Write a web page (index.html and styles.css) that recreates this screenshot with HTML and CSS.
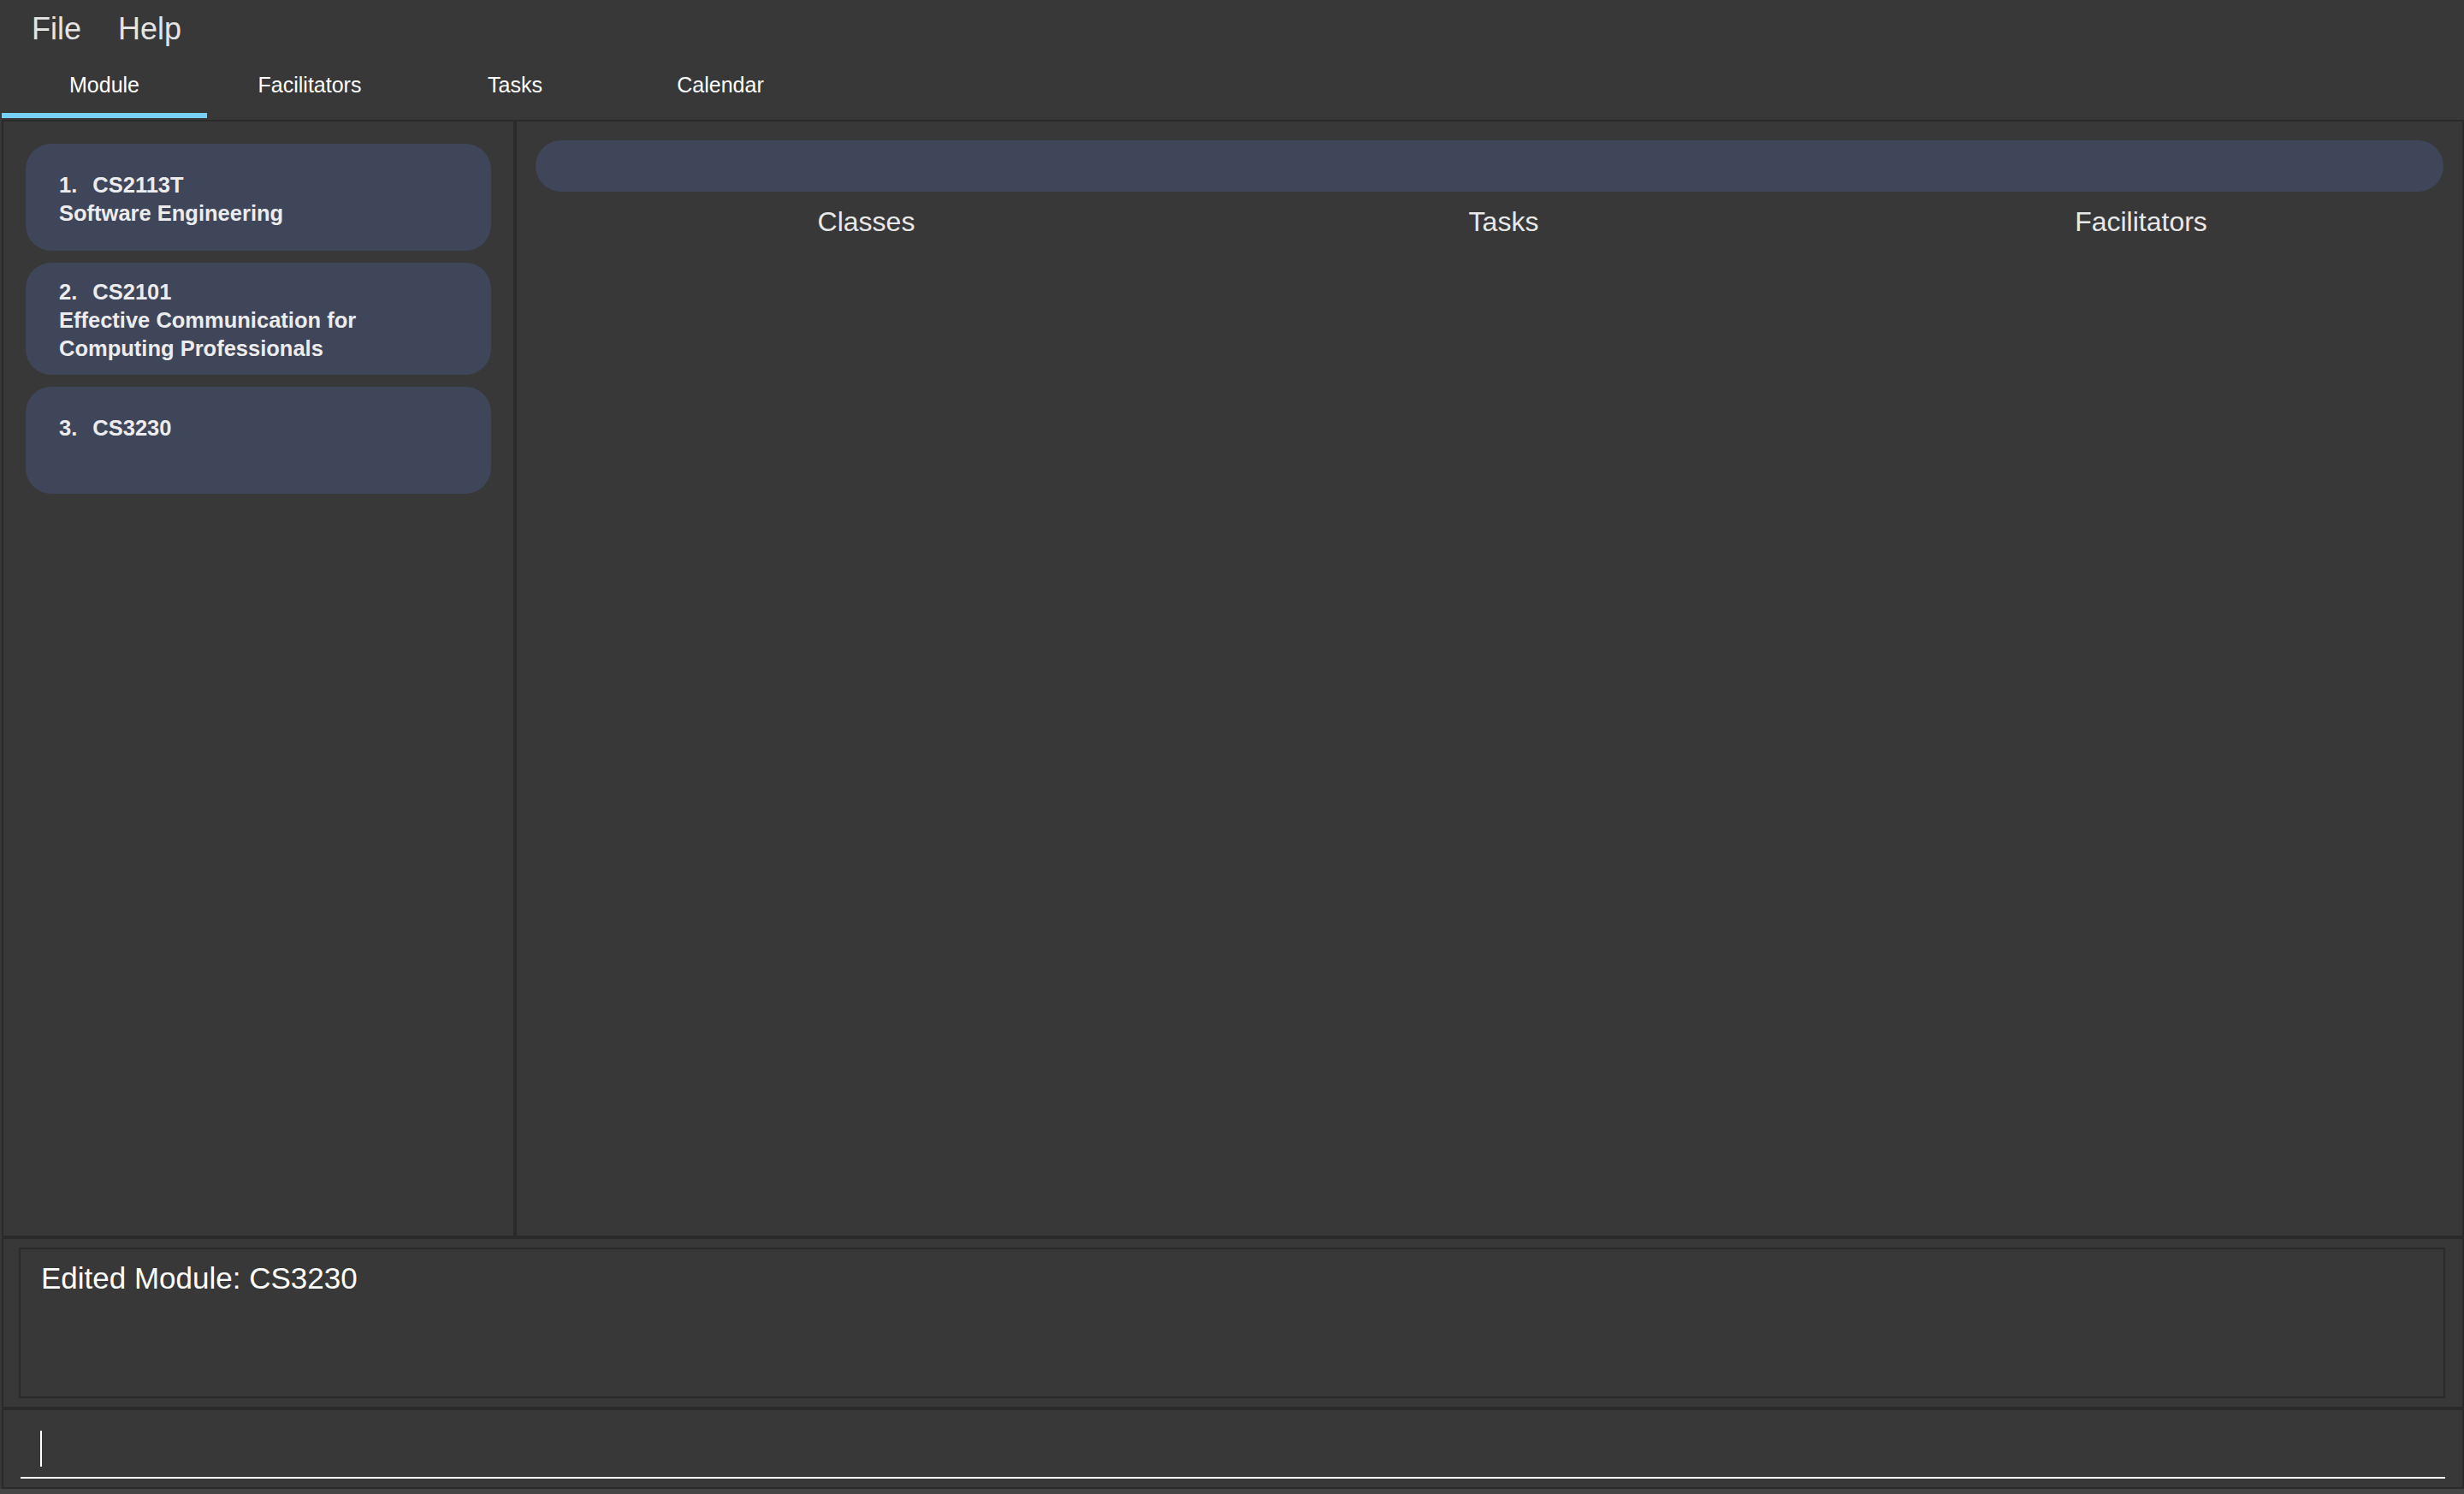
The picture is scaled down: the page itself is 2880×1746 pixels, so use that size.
FILE: index.html
```html
<!DOCTYPE html>
<html lang="en">
<head>
<meta charset="utf-8">
<title>Module Tracker</title>
<link rel="stylesheet" href="styles.css">
</head>
<body>
<div class="app">
  <nav class="menubar">
    <span class="menu-item">File</span>
    <span class="menu-item">Help</span>
  </nav>
  <div class="tabs">
    <div class="tab active">Module</div>
    <div class="tab">Facilitators</div>
    <div class="tab">Tasks</div>
    <div class="tab">Calendar</div>
  </div>
  <div class="frame">
    <div class="split">
      <aside class="list-pane">
        <div class="card">
          <div class="card-title"><span class="idx">1.</span><span>CS2113T</span></div>
          <div class="card-line">Software Engineering</div>
        </div>
        <div class="card">
          <div class="card-title"><span class="idx">2.</span><span>CS2101</span></div>
          <div class="card-line">Effective Communication for Computing Professionals</div>
        </div>
        <div class="card">
          <div class="card-title"><span class="idx">3.</span><span>CS3230</span></div>
          <div class="card-line empty"></div>
        </div>
      </aside>
      <section class="detail-pane">
        <div class="pill"></div>
        <div class="columns">
          <div class="col-label">Classes</div>
          <div class="col-label">Tasks</div>
          <div class="col-label">Facilitators</div>
        </div>
      </section>
    </div>
    <div class="result-pane">
      <div class="result-box">Edited Module: CS3230</div>
    </div>
    <div class="command-pane">
      <div class="command-input"><span class="caret"></span></div>
    </div>
  </div>
  <div class="status-strip"></div>
</div>
</body>
</html>
```
FILE: styles.css
```css
html, body {
  margin: 0;
  padding: 0;
  background: #383838;
}
body {
  width: 2880px;
  height: 1746px;
  overflow: hidden;
  font-family: "Liberation Sans", Arial, sans-serif;
}
.app {
  display: flex;
  flex-direction: column;
  height: 1746px;
}
.menubar {
  height: 66px;
  box-sizing: border-box;
  padding: 13px 0 0 37px;
  display: flex;
  gap: 43px;
  font-size: 36px;
  color: #e4e4e4;
}
.tabs {
  display: flex;
  margin-left: 2px;
  height: 72px;
}
.tab {
  width: 240px;
  box-sizing: border-box;
  padding-top: 18px;
  height: 72px;
  text-align: center;
  font-size: 25px;
  line-height: 30px;
  color: #ffffff;
  border-bottom: 6px solid transparent;
}
.tab.active {
  border-bottom-color: #78d0f8;
}
.frame {
  margin-top: 2px;
  margin-left: 2px;
  height: 1600px;
  box-sizing: border-box;
  border: 2px solid #2a2a2a;
  display: flex;
  flex-direction: column;
}
.split {
  display: flex;
  height: 1302px;
  border-bottom: 4px solid #2a2a2a;
}
.list-pane {
  width: 600px;
  box-sizing: border-box;
  padding: 26px;
  border-right: 4px solid #2a2a2a;
  display: flex;
  flex-direction: column;
  gap: 14px;
}
.card {
  background: #404659;
  border-radius: 30px;
  min-height: 125px;
  box-sizing: border-box;
  padding: 18px 80px 14px 39px;
  display: flex;
  flex-direction: column;
  justify-content: center;
  color: #ececee;
  font-weight: bold;
  font-size: 25.5px;
  line-height: 33px;
}
.card-title {
  display: flex;
  gap: 18px;
}
.card-line.empty {
  min-height: 33px;
}
.detail-pane {
  flex: 1;
  padding: 22px 0 0 22px;
}
.pill {
  height: 60px;
  margin-right: 22px;
  border-radius: 30px;
  background: #404659;
}
.columns {
  display: grid;
  grid-template-columns: repeat(3, 1fr);
  margin: 17px 3px 0 14px;
}
.col-label {
  text-align: center;
  font-size: 32px;
  line-height: 37px;
  color: #e8e8e8;
}
.result-pane {
  height: 200px;
  box-sizing: border-box;
  padding: 10px 20px 10px 18px;
  border-bottom: 4px solid #2a2a2a;
}
.result-box {
  height: 100%;
  box-sizing: border-box;
  border: 2px solid #2a2a2a;
  padding: 14px 24px;
  font-size: 35px;
  line-height: 40px;
  color: #ffffff;
}
.command-pane {
  flex: 1;
  padding: 0 20px 0 20px;
}
.command-input {
  height: 80px;
  box-sizing: border-box;
  padding: 24px 0 0 23px;
  border-bottom: 2px solid #ffffff;
}
.caret {
  display: block;
  width: 2px;
  height: 42px;
  background: #ffffff;
}
.status-strip {
  flex: 1;
  background: #454545;
}
```
